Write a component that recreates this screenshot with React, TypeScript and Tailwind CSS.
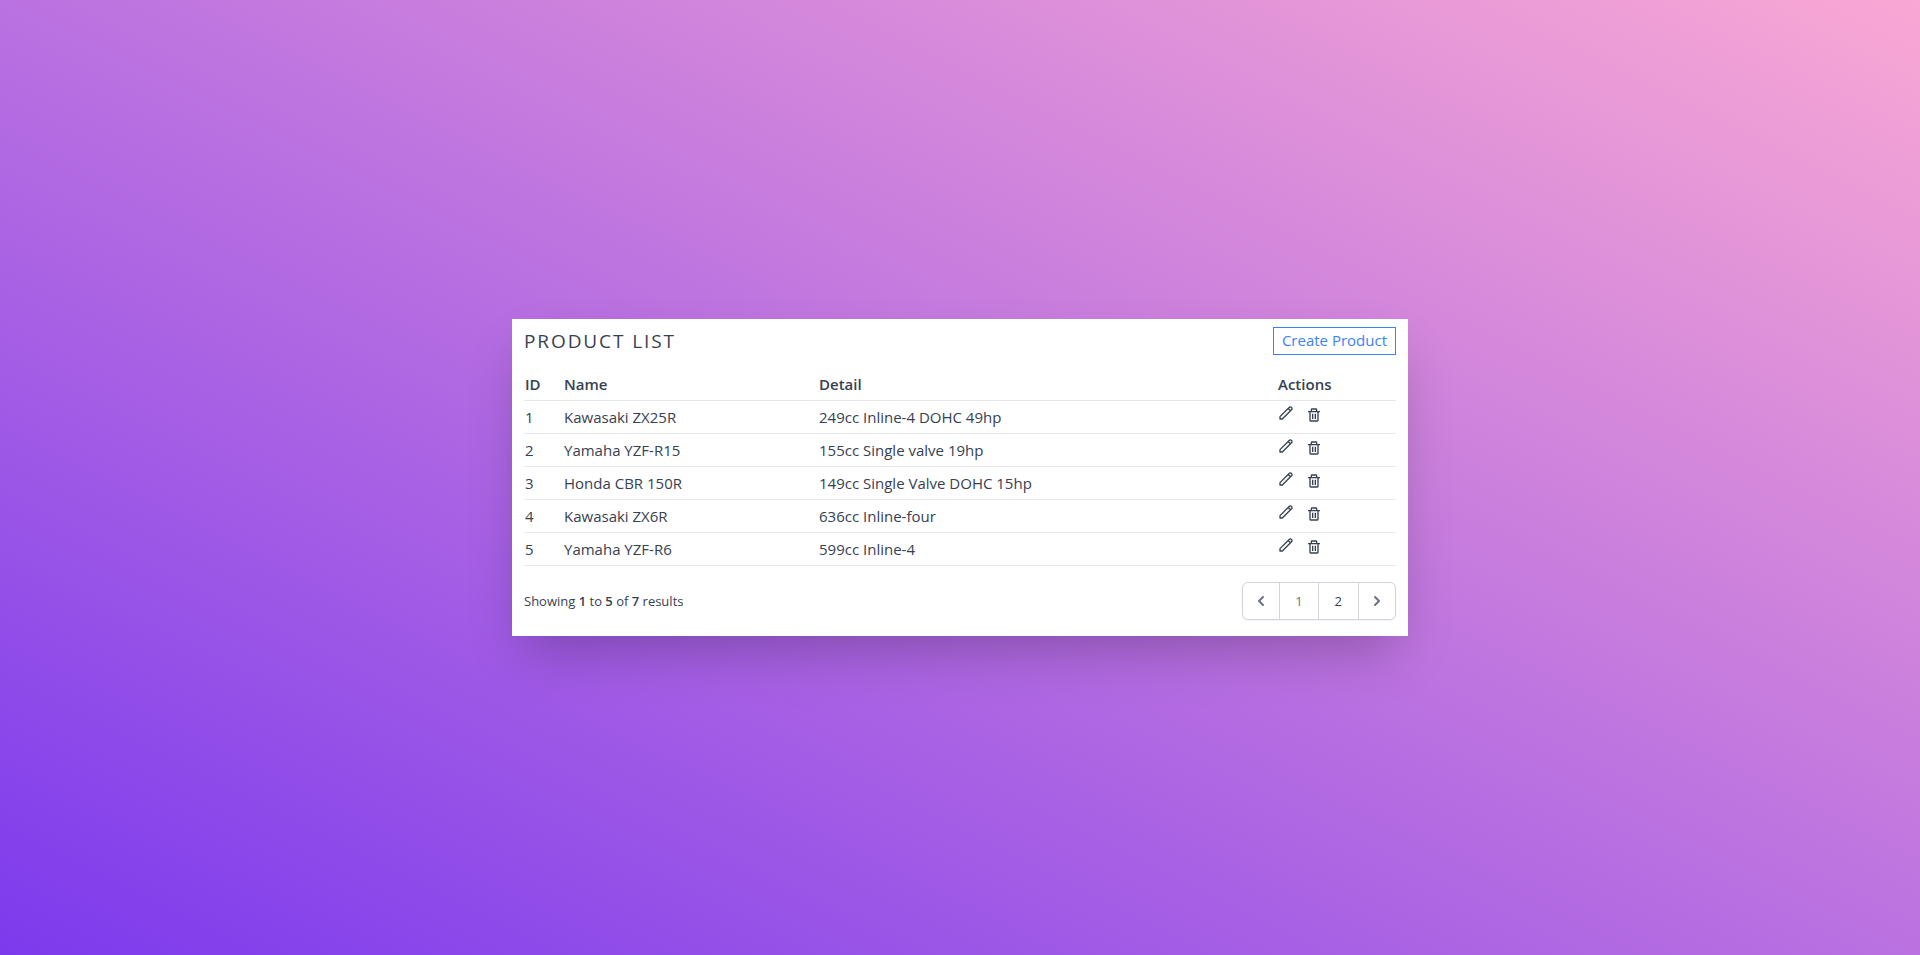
import { BiTrash } from "react-icons/bi";
import { HiChevronLeft, HiChevronRight, HiOutlinePencil } from "react-icons/hi";

interface Product {
  id: number;
  name: string;
  detail: string;
}

const products: Product[] = [
  { id: 1, name: "Kawasaki ZX25R", detail: "249cc Inline-4 DOHC 49hp" },
  { id: 2, name: "Yamaha YZF-R15", detail: "155cc Single valve 19hp" },
  { id: 3, name: "Honda CBR 150R", detail: "149cc Single Valve DOHC 15hp" },
  { id: 4, name: "Kawasaki ZX6R", detail: "636cc Inline-four" },
  { id: 5, name: "Yamaha YZF-R6", detail: "599cc Inline-4" },
];

function ProductRow({ product }: { product: Product }) {
  return (
    <tr className="border-b border-[#e5e7eb]">
      <td className="px-px py-1">{product.id}</td>
      <td className="px-px py-1">{product.name}</td>
      <td className="px-px py-1">{product.detail}</td>
      <td className="px-px py-1 align-top">
        <div className="flex items-start gap-3">
          <button type="button" aria-label={`Edit ${product.name}`}>
            <HiOutlinePencil className="size-4" />
          </button>
          <button type="button" aria-label={`Delete ${product.name}`} className="pt-0.5">
            <BiTrash className="size-4" />
          </button>
        </div>
      </td>
    </tr>
  );
}

export default function App() {
  return (
    <main className="flex min-h-screen items-center justify-center bg-[linear-gradient(to_top_right,#7c3aed,#f9a8d4)] font-['Open_Sans',sans-serif] text-[15px] leading-6 text-[#374151]">
      <section className="w-full max-w-4xl bg-white px-3 pt-2 pb-4 shadow-2xl">
        <header className="mb-3 flex items-start justify-between">
          <h1 className="text-[19px] leading-[29px] tracking-widest uppercase">Product List</h1>
          <button type="button" className="border border-[#3b82f6] px-2 pb-0.5 text-[#3b82f6]">
            Create Product
          </button>
        </header>
        <table className="w-full table-fixed text-left">
          <thead>
            <tr className="border-b border-[#e5e7eb]">
              <th className="w-[39px] px-px py-1 font-semibold">ID</th>
              <th className="w-[255px] px-px py-1 font-semibold">Name</th>
              <th className="px-px py-1 font-semibold">Detail</th>
              <th className="w-[119px] px-px py-1 font-semibold">Actions</th>
            </tr>
          </thead>
          <tbody>
            {products.map((product) => (
              <ProductRow key={product.id} product={product} />
            ))}
          </tbody>
        </table>
        <footer className="mt-4 flex items-center justify-between text-[13px] leading-5">
          <p>
            Showing <span className="font-semibold">1</span> to <span className="font-semibold">5</span> of{" "}
            <span className="font-semibold">7</span> results
          </p>
          <nav aria-label="Pagination" className="flex divide-x divide-[#d1d5db] rounded-md border border-[#d1d5db] font-medium shadow-xs">
            <button type="button" aria-label="Previous page" className="p-2 text-[#6b7280]">
              <HiChevronLeft className="size-5" />
            </button>
            <button type="button" aria-current="page" className="px-[15px] py-2 text-[#6b7280]">1</button>
            <button type="button" className="px-4 py-2">2</button>
            <button type="button" aria-label="Next page" className="p-2 text-[#6b7280]">
              <HiChevronRight className="size-5" />
            </button>
          </nav>
        </footer>
      </section>
    </main>
  );
}
